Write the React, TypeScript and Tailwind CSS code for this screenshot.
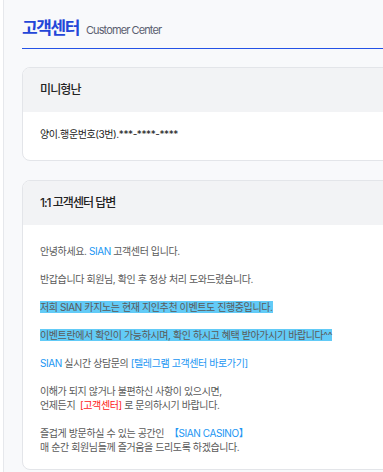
import React from "react";

const font = { fontFamily: '"Inter", "Noto Sans CJK KR", sans-serif' };

function Blank() {
  return <div className="h-[14px]" />;
}

export default function App() {
  return (
    <div
      className="w-[383px] h-[472px] overflow-hidden flex bg-white"
      style={font}
    >
      <div className="w-[3px] shrink-0 bg-white" />
      <div className="w-[1100px] shrink-0 border-l border-[#e6e8ec] bg-[#f8f9fb] pl-[18px]">
        {/* Title */}
        <div className="flex items-baseline gap-[7px] pt-[16px] pb-[8px] border-b border-[#2452e6]">
          <h1 className="text-[17px] leading-[24px] font-bold tracking-[-1.4px] text-[#2446d8]">
            고객센터
          </h1>
          <span className="text-[11px] tracking-[-0.9px] text-[#5b6070]">
            Customer Center
          </span>
        </div>

        {/* Card 1 */}
        <div className="mt-[18px] rounded-[8px] border border-[#e3e5e9] bg-white overflow-hidden">
          <div className="h-[44px] flex items-center px-[17px] bg-[#f2f3f5] text-[12px] font-medium tracking-[-0.9px] text-[#222]">
            미니형난
          </div>
          <div className="pt-[15px] pb-[19px] px-[17px] text-[10px] leading-[14px] tracking-[-0.4px] text-[#222]">
            양이.행운번호(3번).***-****-****
          </div>
        </div>

        {/* Card 2 */}
        <div className="mt-[19px] rounded-[8px] border border-[#e3e5e9] bg-white overflow-hidden">
          <div className="h-[44px] flex items-center px-[17px] bg-[#f2f3f5] text-[12px] font-medium tracking-[-1px] text-[#222]">
            1:1 고객센터 답변
          </div>
          <div className="pt-[19px] pb-[15px] px-[17px] text-[10px] leading-[14px] tracking-[-0.4px] text-[#5a5a5a]">
            <p>
              안녕하세요. <span className="text-[#2196f3]">SIAN</span> 고객센터
              입니다.
            </p>
            <Blank />
            <p>반갑습니다 회원님, 확인 후 정상 처리 도와드렸습니다.</p>
            <Blank />
            <p>
              <span className="bg-[#62cbf7]">
                저희 SIAN 카지노는 현재 지인추천 이벤트도 진행중입니다.
              </span>
            </p>
            <Blank />
            <p>
              <span className="bg-[#62cbf7]">
                이벤트란에서 확인이 가능하시며, 확인 하시고 혜택 받아가시기
                바랍니다^^
              </span>
            </p>
            <Blank />
            <p>
              <span className="text-[#2196f3]">SIAN</span> 실시간 상담문의{" "}
              <span className="text-[#2196f3]">[텔레그램 고객센터 바로가기]</span>
            </p>
            <Blank />
            <p>이해가 되지 않거나 불편하신 사항이 있으시면,</p>
            <p>
              언제든지&nbsp;&nbsp;
              <span className="text-[#ff2020]">[고객센터]</span> 로 문의하시기
              바랍니다.
            </p>
            <Blank />
            <p>
              즐겁게 방문하실 수 있는 공간인&nbsp;&nbsp;
              <span className="text-[#2196f3]">【SIAN CASINO】</span>
            </p>
            <p>매 순간 회원님들께 즐거움을 드리도록 하겠습니다.</p>
          </div>
        </div>
      </div>
    </div>
  );
}
